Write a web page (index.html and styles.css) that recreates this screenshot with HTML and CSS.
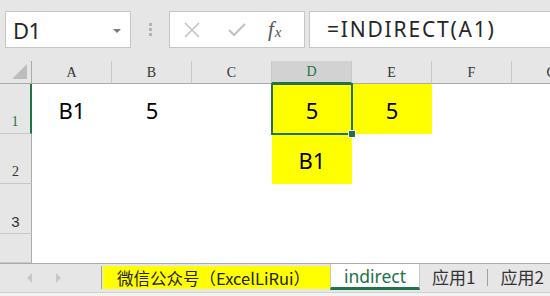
FILE: index.html
```html
<!DOCTYPE html>
<html>
<head>
<meta charset="utf-8">
<link rel="stylesheet" href="styles.css">
</head>
<body>
<div class="app">
  <div class="formula-bar">
    <div class="name-box">
      <span class="name-text">D1</span>
      <span class="name-arrow"></span>
    </div>
    <div class="grip"><i></i><i></i><i></i></div>
    <div class="fx-buttons">
      <svg class="ico" width="18" height="16" viewBox="0 0 18 16"><path d="M2 1 L16 15 M16 1 L2 15" stroke="#c2c2c2" stroke-width="1.6" fill="none"/></svg>
      <svg class="ico" width="18" height="16" viewBox="0 0 18 16"><path d="M1 8 L6 13 L17 2" stroke="#c2c2c2" stroke-width="2.2" fill="none"/></svg>
      <span class="fx">f<span class="fx-x">x</span></span>
    </div>
    <div class="formula-input">=INDIRECT(A1)</div>
  </div>

  <div class="sheet">
    <div class="corner"><span class="tri"></span></div>
    <div class="ch">A</div>
    <div class="ch">B</div>
    <div class="ch">C</div>
    <div class="ch ch-sel">D</div>
    <div class="ch">E</div>
    <div class="ch">F</div>
    <div class="ch">G</div>

    <div class="rh rh-sel">1</div>
    <div class="c">B1</div>
    <div class="c">5</div>
    <div class="c"></div>
    <div class="c yel sel">5</div>
    <div class="c yel">5</div>
    <div class="c"></div>
    <div class="c"></div>

    <div class="rh">2</div>
    <div class="c"></div>
    <div class="c"></div>
    <div class="c"></div>
    <div class="c yel">B1</div>
    <div class="c"></div>
    <div class="c"></div>
    <div class="c"></div>

    <div class="rh sans">3</div>
    <div class="c"></div>
    <div class="c"></div>
    <div class="c"></div>
    <div class="c"></div>
    <div class="c"></div>
    <div class="c"></div>
    <div class="c"></div>

    <div class="rh"></div>
    <div class="c"></div>
    <div class="c"></div>
    <div class="c"></div>
    <div class="c"></div>
    <div class="c"></div>
    <div class="c"></div>
    <div class="c"></div>
  </div>

  <div class="tabbar">
    <div class="nav">
      <svg width="8" height="12" viewBox="0 0 8 12"><path d="M6 1 L1 6 L6 11 Z" fill="#c8c8c8"/></svg>
      <svg width="8" height="12" viewBox="0 0 8 12"><path d="M2 1 L7 6 L2 11 Z" fill="#c8c8c8"/></svg>
    </div>
    <div class="tab tab-yellow">微信公众号（ExcelLiRui）</div>
    <div class="tab tab-active">indirect</div>
    <div class="tab tab-plain">应用1</div>
    <div class="tab-sep"></div>
    <div class="tab tab-plain">应用2</div>
  </div>
  <div class="status"></div>
</div>
</body>
</html>
```

FILE: styles.css
```css
* { box-sizing: border-box; }
html, body { margin: 0; padding: 0; }
body {
  width: 550px;
  height: 296px;
  overflow: hidden;
  background: #ffffff;
  font-family: "Noto Sans", "Noto Sans CJK SC", sans-serif;
}
.app {
  display: flex;
  flex-direction: column;
  width: 550px;
  height: 296px;
}

/* ---------- formula bar ---------- */
.formula-bar {
  height: 61px;
  flex: none;
  background: #e6e6e6;
  display: flex;
  align-items: flex-start;
  padding: 11px 0 0 5px;
  overflow: hidden;
}
.name-box {
  width: 126px;
  height: 37px;
  flex: none;
  background: #fff;
  border: 1px solid #c6c6c6;
  display: flex;
  align-items: center;
  justify-content: space-between;
  padding: 0 9px 0 7px;
}
.name-text {
  font-family: "Noto Sans", sans-serif;
  font-size: 22px;
  color: #262626;
  letter-spacing: -0.5px;
}
.name-arrow {
  width: 0;
  height: 0;
  border-left: 4px solid transparent;
  border-right: 4px solid transparent;
  border-top: 4px solid #7a7a7a;
  margin-top: 2px;
}
.grip {
  width: 38px;
  height: 37px;
  flex: none;
  display: flex;
  flex-direction: column;
  align-items: center;
  justify-content: center;
  gap: 2px;
}
.grip i {
  display: block;
  width: 3px;
  height: 3px;
  background: #b4b4b4;
}
.fx-buttons {
  width: 136px;
  height: 37px;
  flex: none;
  background: #fff;
  border: 1px solid #c6c6c6;
  display: flex;
  align-items: center;
  padding: 0 0 0 13px;
  gap: 27px;
}
.fx {
  font-family: "Liberation Serif", serif;
  font-style: italic;
  font-size: 21px;
  color: #555;
  line-height: 1;
  margin-left: -5px;
  display: flex;
  align-items: baseline;
}
.fx-x {
  font-size: 15px;
  margin-left: 1px;
  position: relative;
  top: 1px;
}
.formula-input {
  flex: 1;
  min-width: 260px;
  height: 37px;
  margin-left: 4px;
  background: #fff;
  border: 1px solid #c6c6c6;
  border-right: none;
  font-family: "Noto Sans", sans-serif;
  font-size: 21px;
  letter-spacing: 1.8px;
  color: #262626;
  line-height: 35px;
  padding-left: 17px;
  white-space: nowrap;
}

/* ---------- sheet ---------- */
.sheet {
  flex: none;
  display: grid;
  grid-template-columns: 32px repeat(7, 80px);
  grid-template-rows: 23px 50px 50px 50px 29px;
  width: 550px;
  overflow: hidden;
  border-bottom: 1px solid #ababab;
}
.corner {
  background: #e6e6e6;
  border-right: 1px solid #ababab;
  border-bottom: 1px solid #ababab;
  position: relative;
}
.tri {
  position: absolute;
  right: 4px;
  bottom: 4px;
  width: 0;
  height: 0;
  border-left: 15px solid transparent;
  border-bottom: 15px solid #bdbdbd;
}
.ch {
  background: #e6e6e6;
  border-right: 1px solid #c8c8c8;
  border-bottom: 1px solid #ababab;
  display: flex;
  align-items: center;
  justify-content: center;
  font-family: "Liberation Serif", serif;
  font-size: 14px;
  color: #333;
  padding-top: 1px;
}
.ch-sel {
  background: #d2d2d2;
  color: #217346;
  border-bottom: 2px solid #217346;
}
.rh {
  background: #e6e6e6;
  border-right: 1px solid #ababab;
  border-bottom: 1px solid #c8c8c8;
  display: flex;
  align-items: flex-end;
  justify-content: center;
  padding-bottom: 3px;
  font-family: "Liberation Serif", serif;
  font-size: 14px;
  color: #333;
}
.rh.sans {
  font-family: "Liberation Sans", sans-serif;
  font-size: 15px;
}
.rh-sel {
  border-right: 2px solid #217346;
  color: #217346;
}
.c {
  background: #fff;
  display: flex;
  align-items: center;
  justify-content: center;
  font-family: "Noto Sans", sans-serif;
  font-size: 22px;
  color: #000;
  padding-top: 1px;
}
.yel { background: #ffff00; }
.sel {
  position: relative;
  z-index: 2;
  outline: 2px solid #217346;
  outline-offset: -1px;
}
.sel::after {
  content: "";
  position: absolute;
  right: -4px;
  bottom: -4px;
  width: 6px;
  height: 6px;
  background: #217346;
  border: 1px solid #fff;
}

/* ---------- tabs ---------- */
.tabbar {
  height: 29px;
  flex: none;
  background: #e6e6e6;
  display: flex;
  align-items: stretch;
  border-bottom: 1px solid #d0d0d0;
  overflow: hidden;
}
.nav {
  width: 102px;
  flex: none;
  display: flex;
  align-items: center;
  padding-left: 26px;
  gap: 20px;
  border-right: 1px solid #a0a0a0;
  margin: 2px 0 3px 0;
}
.tab {
  flex: none;
  display: flex;
  align-items: center;
  justify-content: center;
  font-family: "Noto Sans CJK SC", sans-serif;
  font-size: 17px;
  color: #333;
  white-space: nowrap;
}
.tab-yellow {
  width: 227px;
  background: #ffff00;
  margin: 2px 0 3px 1px;
  padding-top: 1px;
  color: #222;
  font-size: 16.5px;
  padding-right: 6px;
}
.tab-active {
  width: 90px;
  background: #fff;
  color: #217346;
  border-left: 1px solid #c8c8c8;
  border-right: 1px solid #c8c8c8;
  border-bottom: 3px solid #217346;
  margin-top: -1px;
  margin-bottom: 2px;
  font-family: "Noto Sans", sans-serif;
  font-size: 17.5px;
  padding-top: 1px;
}
.tab-plain {
  padding: 0 12px;
  font-size: 17px;
  padding-bottom: 3px;
}
.tab-sep {
  flex: none;
  width: 1px;
  background: #a0a0a0;
  margin: 5px 0 6px 0;
}
.status {
  flex: 1;
  background: #f3f3f3;
}
```
